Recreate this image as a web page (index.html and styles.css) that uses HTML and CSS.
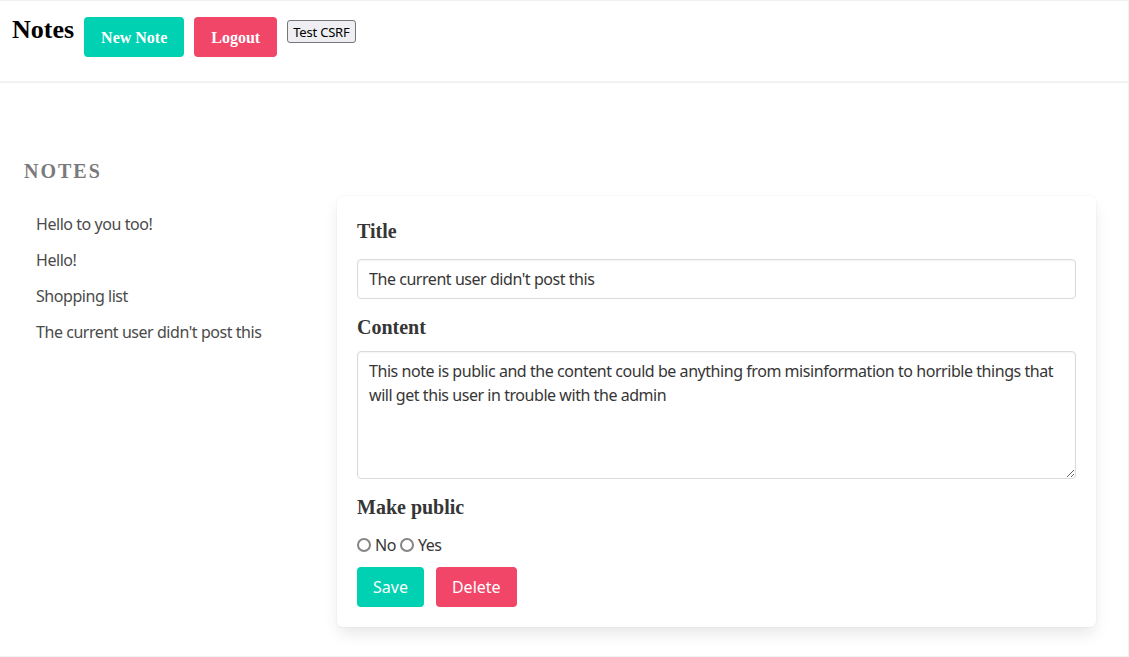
FILE: index.html
```html
<!DOCTYPE html>
<html lang="en">
<head>
<meta charset="utf-8">
<title>Notes</title>
<link rel="stylesheet" href="styles.css">
</head>
<body>
<div class="page">
  <header class="topbar">
    <h1 class="brand">Notes</h1>
    <button class="btn btn-primary">New Note</button>
    <button class="btn btn-danger">Logout</button>
    <button class="btn-plain">Test CSRF</button>
  </header>
  <main class="layout">
    <aside class="menu">
      <p class="menu-label">Notes</p>
      <ul class="menu-list">
        <li><a>Hello to you too!</a></li>
        <li><a>Hello!</a></li>
        <li><a>Shopping list</a></li>
        <li><a>The current user didn't post this</a></li>
      </ul>
    </aside>
    <section class="box">
      <label class="label">Title</label>
      <input class="input" type="text" value="The current user didn't post this">
      <label class="label label-gap">Content</label>
      <textarea class="textarea">This note is public and the content could be anything from misinformation to horrible things that will get this user in trouble with the admin</textarea>
      <label class="label label-gap2">Make public</label>
      <div class="radios">
        <label class="radio"><input type="radio" name="pub"><span>No</span></label>
        <label class="radio"><input type="radio" name="pub"><span>Yes</span></label>
      </div>
      <div class="actions">
        <button class="btn2 btn-primary">Save</button>
        <button class="btn2 btn-danger">Delete</button>
      </div>
    </section>
  </main>
</div>
</body>
</html>
```
FILE: styles.css
```css
* { box-sizing: border-box; }
html, body { margin: 0; padding: 0; background: #fff; }
body {
  font-family: "Noto Sans", "Open Sans", sans-serif;
  letter-spacing: -0.45px;
  color: #4a4a4a;
}
.page {
  min-height: 657px;
  border: 1px solid #f2f2f2;
  border-left: none;
}
.topbar {
  display: flex;
  align-items: flex-start;
  height: 82px;
  padding: 16px 0 0 12px;
  border-bottom: 2px solid #f2f2f2;
}
.brand {
  margin: 0 10px 0 0;
  font-family: "Liberation Serif", serif;
  font-size: 26px;
  font-weight: bold;
  line-height: 26px;
  letter-spacing: 0;
  color: #000;
}
.btn {
  height: 40px;
  padding: 2px 17px 0;
  margin-right: 10px;
  border: none;
  border-radius: 4px;
  color: #fff;
  font-family: "Liberation Serif", serif;
  font-weight: bold;
  font-size: 16px;
  letter-spacing: 0;
}
.btn-primary { background: #00d1b2; }
.btn-danger { background: #f14668; }
.btn-plain {
  margin-top: 3px;
  height: 23px;
  padding: 0 5px;
  font-family: "Noto Sans", sans-serif;
  font-size: 13px;
  letter-spacing: -0.2px;
  color: #000;
  background: #efeff3;
  border: 1px solid #767676;
  border-radius: 3px;
}
.layout {
  display: flex;
  align-items: flex-start;
  padding: 73px 0 0 24px;
}
.menu { width: 313px; flex: none; }
.menu-label {
  margin: 0;
  font-family: "Liberation Serif", serif;
  font-weight: bold;
  font-size: 20px;
  line-height: 30px;
  letter-spacing: 2px;
  text-transform: uppercase;
  color: #7a7a7a;
}
.menu-list {
  list-style: none;
  margin: 20px 0 0;
  padding: 0;
}
.menu-list a {
  display: block;
  padding: 8px 12px;
  font-size: 16px;
  line-height: 20px;
  color: #4a4a4a;
}
.box {
  width: 759px;
  margin-top: 40px;
  padding: 20px;
  background: #fff;
  border-radius: 6px;
  box-shadow: 0 8px 16px -2px rgba(10,10,10,.1), 0 0 0 1px rgba(10,10,10,.02);
  display: flex;
  flex-direction: column;
}
.label {
  display: block;
  font-family: "Liberation Serif", serif;
  font-weight: bold;
  font-size: 20px;
  line-height: 30px;
  letter-spacing: 0;
  color: #363636;
  margin-bottom: 13px;
}
.label-gap { margin-top: 13px; margin-bottom: 9px; }
.label-gap2 { margin-top: 13px; margin-bottom: 11px; }
.input, .textarea {
  width: 100%;
  border: 1px solid #dbdbdb;
  border-radius: 4px;
  font-family: inherit;
  font-size: 16px;
  letter-spacing: -0.45px;
  color: #363636;
  padding: 0 11px;
  box-shadow: inset 0 1px 2px rgba(10,10,10,.05);
}
.input { height: 40px; line-height: 24px; }
.textarea {
  height: 128px;
  padding: 7px 11px;
  line-height: 24px;
  resize: vertical;
}
.radios { display: flex; align-items: center; height: 24px; font-size: 16px; color: #363636; }
.radio { display: flex; align-items: center; margin-right: 4px; }
.radio input {
  appearance: none;
  -webkit-appearance: none;
  width: 14px; height: 14px;
  margin: 0 4px 0 0;
  border: 2px solid #858585;
  border-radius: 50%;
  background: #fff;
}
.actions { display: flex; gap: 12px; margin-top: 10px; }
.btn2 {
  height: 40px;
  padding: 0 16px;
  border: none;
  border-radius: 4px;
  color: #fff;
  font-family: "Noto Sans", sans-serif;
  font-size: 16px;
  letter-spacing: 0;
}
```
